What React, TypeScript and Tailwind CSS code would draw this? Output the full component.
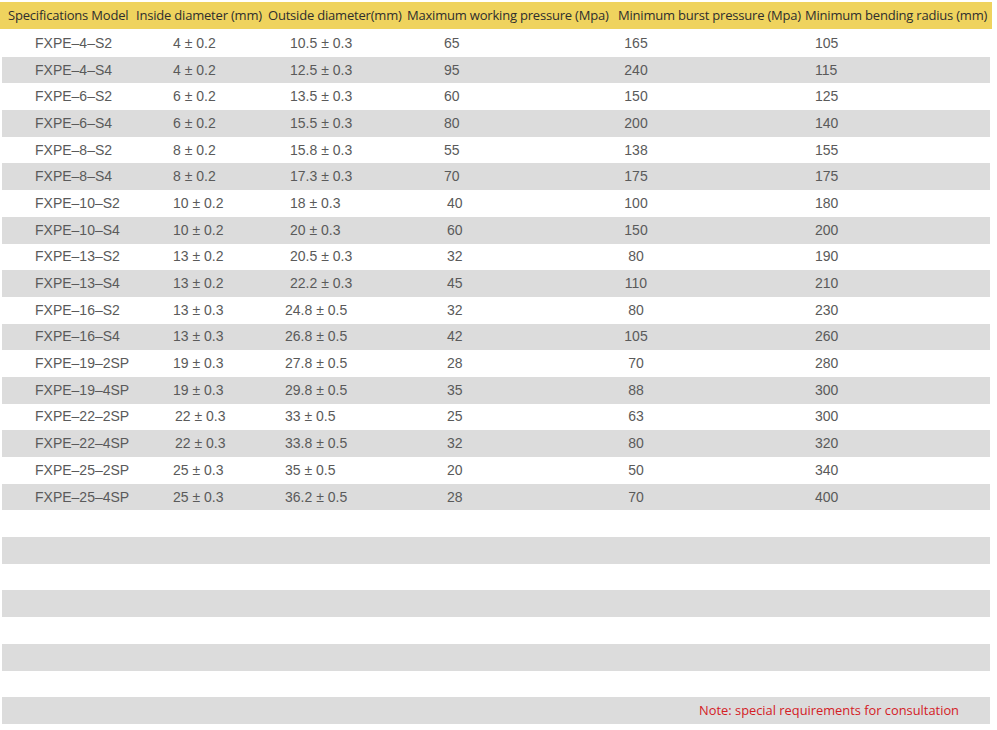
import React from 'react';

const rows: [string, string, string, string, string, string][] = [
  ['FXPE–4–S2', '4 ± 0.2', '10.5 ± 0.3', '65', '165', '105'],
  ['FXPE–4–S4', '4 ± 0.2', '12.5 ± 0.3', '95', '240', '115'],
  ['FXPE–6–S2', '6 ± 0.2', '13.5 ± 0.3', '60', '150', '125'],
  ['FXPE–6–S4', '6 ± 0.2', '15.5 ± 0.3', '80', '200', '140'],
  ['FXPE–8–S2', '8 ± 0.2', '15.8 ± 0.3', '55', '138', '155'],
  ['FXPE–8–S4', '8 ± 0.2', '17.3 ± 0.3', '70', '175', '175'],
  ['FXPE–10–S2', '10 ± 0.2', '18 ± 0.3', '40', '100', '180'],
  ['FXPE–10–S4', '10 ± 0.2', '20 ± 0.3', '60', '150', '200'],
  ['FXPE–13–S2', '13 ± 0.2', '20.5 ± 0.3', '32', '80', '190'],
  ['FXPE–13–S4', '13 ± 0.2', '22.2 ± 0.3', '45', '110', '210'],
  ['FXPE–16–S2', '13 ± 0.3', '24.8 ± 0.5', '32', '80', '230'],
  ['FXPE–16–S4', '13 ± 0.3', '26.8 ± 0.5', '42', '105', '260'],
  ['FXPE–19–2SP', '19 ± 0.3', '27.8 ± 0.5', '28', '70', '280'],
  ['FXPE–19–4SP', '19 ± 0.3', '29.8 ± 0.5', '35', '88', '300'],
  ['FXPE–22–2SP', '22 ± 0.3', '33 ± 0.5', '25', '63', '300'],
  ['FXPE–22–4SP', '22 ± 0.3', '33.8 ± 0.5', '32', '80', '320'],
  ['FXPE–25–2SP', '25 ± 0.3', '35 ± 0.5', '20', '50', '340'],
  ['FXPE–25–4SP', '25 ± 0.3', '36.2 ± 0.5', '28', '70', '400'],
];

const headers = [
  { label: 'Specifications Model', cls: 'w-[132px] pl-[8px]' },
  { label: 'Inside diameter (mm)', cls: 'w-[133px] pl-[4px]' },
  { label: 'Outside diameter(mm)', cls: 'w-[138px] pl-[3px]' },
  { label: 'Maximum working pressure (Mpa)', cls: 'w-[210px] pl-[4px]' },
  { label: 'Minimum burst pressure (Mpa)', cls: 'w-[189px] pl-[5px]' },
  { label: 'Minimum bending radius (mm)', cls: 'pl-[3px]' },
];

const heading = { fontFamily: '"Open Sans", "Noto Sans", sans-serif' };
const body = { fontFamily: '"Liberation Sans", Arial, sans-serif' };

export default function App() {
  const empty = Array.from({ length: 8 });
  return (
    <div className="w-[997px] h-[730px] bg-white overflow-hidden pt-[2px]">
      <div
        className="flex items-center h-[27px] w-[992px] bg-[#efd35e] text-[#2e2e2e] text-[13px] whitespace-nowrap tracking-[-0.2px]"
        style={heading}
      >
        {headers.map((h) => (
          <div key={h.label} className={h.cls}>
            {h.label}
          </div>
        ))}
      </div>

      <div className="text-[#5a5a5a] text-[14px] whitespace-nowrap pt-[1px]" style={body}>
        {rows.map((r, i) => (
          <div
            key={r[0]}
            className={`flex items-center h-[26.7px] ml-[2px] w-[988px] ${i % 2 ? 'bg-[#dcdcdc]' : ''}`}
          >
            <div className="w-[130px] pl-[33px]">{r[0]}</div>
            <div className={`w-[133px] ${i >= 14 && i < 16 ? 'pl-[43px]' : 'pl-[41px]'}`}>{r[1]}</div>
            <div className={`w-[138px] ${i >= 10 ? 'pl-[20px]' : 'pl-[25px]'}`}>{r[2]}</div>
            <div className={`w-[199px] ${i >= 6 ? 'pl-[44px]' : 'pl-[41px]'}`}>{r[3]}</div>
            <div className="w-[68px] text-center">{r[4]}</div>
            <div className="pl-[145px]">{r[5]}</div>
          </div>
        ))}
        {empty.map((_, j) => {
          const i = rows.length + j;
          const last = j === empty.length - 1;
          return (
            <div
              key={i}
              className={`flex items-center justify-end h-[26.7px] ml-[2px] w-[988px] ${i % 2 ? 'bg-[#dcdcdc]' : ''}`}
            >
              {last && (
                <span className="pr-[31px] text-[12.85px] text-[#d42026]" style={heading}>
                  Note: special requirements for consultation
                </span>
              )}
            </div>
          );
        })}
      </div>
    </div>
  );
}
